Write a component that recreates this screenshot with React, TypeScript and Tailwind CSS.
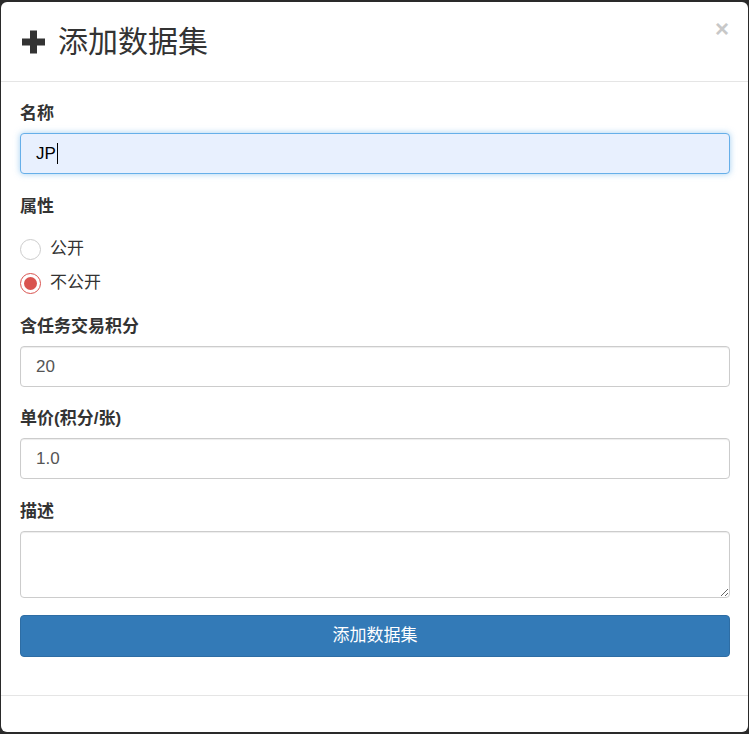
import React from "react";

const FONT = {
  fontFamily: '"Liberation Sans", "Noto Sans CJK SC", sans-serif',
};

function PlusIcon() {
  return (
    <svg width="27" height="26" viewBox="0 0 26 26" className="shrink-0">
      <path
        d="M9.5 1.5h7v8h8v7h-8v8h-7v-8h-8v-7h8z"
        fill="#333"
        strokeLinejoin="round"
      />
    </svg>
  );
}

function Label({ children }: { children: React.ReactNode }) {
  return (
    <div className="text-[17px] leading-[22px] font-bold text-[#333] mb-2">
      {children}
    </div>
  );
}

function TextInput({ value }: { value: string }) {
  return (
    <div className="h-[41px] flex items-center px-[15px] border border-[#ccc] rounded-[4px] bg-white text-[17px] text-[#555] shadow-[inset_0_1px_1px_rgba(0,0,0,0.075)]">
      {value}
    </div>
  );
}

function Radio({ checked, label }: { checked?: boolean; label: string }) {
  return (
    <div className="h-[34px] flex items-center gap-[9px]">
      <span
        className={[
          "w-[21px] h-[21px] rounded-full border flex items-center justify-center bg-white",
          checked ? "border-[#d9534f]" : "border-[#ccc]",
        ].join(" ")}
      >
        {checked && (
          <span className="w-[13px] h-[13px] rounded-full bg-[#d9534f]" />
        )}
      </span>
      <span className="text-[17px] text-[#333]">{label}</span>
    </div>
  );
}

export default function App() {
  return (
    <div className="w-[749px] h-[734px] bg-[#2a2a2a] pt-[2px] pl-px" style={FONT}>
      <div className="w-[747px] h-[730px] bg-white rounded-[6px] flex flex-col">
        <div className="h-[80px] shrink-0 flex items-center pl-[19px] pr-[18px] border-b border-[#e5e5e5] relative">
          <div className="flex items-center gap-[11px] text-[30px] text-[#333] leading-none">
            <PlusIcon />
            <span>添加数据集</span>
          </div>
          <span className="absolute right-[19px] top-[15px] text-[24px] font-bold text-[#c8c8c8] leading-none">
            ×
          </span>
        </div>

        <div className="pl-[19px] pr-[18px] pt-[21px]">
          <Label>名称</Label>
          <div className="h-[41px] flex items-center px-[15px] border border-[#66afe9] rounded-[4px] bg-[#e8f0fe] text-[17px] text-black shadow-[0_0_6px_rgba(102,175,233,0.6)]">
            JP
            <span className="inline-block w-px h-[21px] bg-black ml-px" />
          </div>

          <div className="mt-[22px]">
            <Label>属性</Label>
          </div>
          <div className="mt-[14px]">
            <Radio label="公开" />
            <Radio checked label="不公开" />
          </div>

          <div className="mt-[16px]">
            <Label>含任务交易积分</Label>
          </div>
          <TextInput value="20" />

          <div className="mt-[21px]">
            <Label>单价(积分/张)</Label>
          </div>
          <TextInput value="1.0" />

          <div className="mt-[22px]">
            <Label>描述</Label>
          </div>
          <textarea
            className="block w-full h-[67px] border border-[#ccc] rounded-[4px] px-[15px] py-2 text-[17px] text-[#555] outline-none shadow-[inset_0_1px_1px_rgba(0,0,0,0.075)]"
            defaultValue=""
          />

          <button className="mt-[17px] w-full h-[42px] rounded-[4px] bg-[#337ab7] border border-[#2e6da4] text-white text-[17px]">
            添加数据集
          </button>
        </div>

        <div className="mt-[38px] border-t border-[#e5e5e5]" />
      </div>
    </div>
  );
}
